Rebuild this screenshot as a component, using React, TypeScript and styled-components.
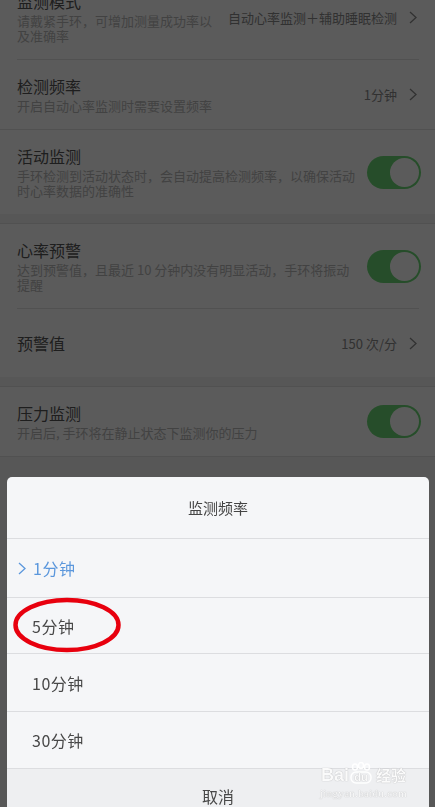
import React from "react";
import styled, { createGlobalStyle } from "styled-components";

const GlobalStyle = createGlobalStyle`
  html, body {
    margin: 0;
    padding: 0;
    height: 807px;
    overflow: hidden;
    background: #f4f4f4;
    font-family: "Noto Sans CJK SC", "Noto Sans", sans-serif;
  }
`;

const Page = styled.div`
  margin-top: -25px;
`;

const Group = styled.section<{ $spaced?: boolean; $closed?: boolean }>`
  background: #fff;
  margin-top: ${(p) => (p.$spaced ? "9px" : "0")};
  border-top: ${(p) => (p.$spaced !== undefined ? "1px solid #e3e3e3" : "none")};
  border-bottom: ${(p) => (p.$closed ? "1px solid #e3e3e3" : "none")};
`;

const Row = styled.div<{ $last?: boolean; $tall?: boolean }>`
  display: flex;
  align-items: center;
  gap: 12px;
  margin: 0 16px 0 17px;
  padding: 16px 0;
  min-height: ${(p) => (p.$tall ? "36px" : "0")};
  border-bottom: ${(p) => (p.$last ? "none" : "1px solid #e3e3e3")};
`;

const Texts = styled.div`
  flex: 1;
  min-width: 0;
`;

const Title = styled.div`
  font-size: 16px;
  line-height: 20px;
  color: #555;
`;

const Sub = styled.div`
  margin-top: 2px;
  font-size: 13px;
  line-height: 15px;
  color: #b9b9b9;
`;

const Value = styled.div`
  display: flex;
  align-items: center;
  flex-shrink: 0;
  font-size: 13px;
  color: #8a8a8a;
  svg {
    margin: 0 2px 0 12px;
  }
`;

const Toggle = styled.div`
  flex-shrink: 0;
  width: 54px;
  height: 33px;
  margin-right: -2px;
  border-radius: 17px;
  background: #6bd975;
  display: flex;
  justify-content: flex-end;
  align-items: center;
  padding: 0 2px;
  box-sizing: border-box;

  &::after {
    content: "";
    width: 29px;
    height: 29px;
    border-radius: 50%;
    background: #fff;
  }
`;

const Overlay = styled.div`
  position: fixed;
  inset: 0;
  background: rgba(0, 0, 0, 0.645);
  display: flex;
  flex-direction: column;
  padding: 477px 6px 0 7px;
  overflow: hidden;
`;

const Sheet = styled.div`
  position: relative;
  background: #f5f6f8;
  border-radius: 5px 5px 0 0;
  overflow: hidden;
`;

const SheetTitle = styled.div`
  height: 61px;
  display: flex;
  align-items: center;
  justify-content: center;
  font-size: 15px;
  color: #444;
  border-bottom: 1px solid #dcdde0;
`;

const Option = styled.div<{ $active?: boolean; $h: number }>`
  position: relative;
  height: ${(p) => p.$h}px;
  display: flex;
  align-items: center;
  padding-left: 25px;
  font-size: 16px;
  letter-spacing: 0.5px;
  color: ${(p) => (p.$active ? "#5b97dc" : "#484848")};
  border-bottom: 1px solid #dcdde0;

  svg.mark {
    margin-left: -14px;
    margin-right: 7px;
  }
`;

const Circle = styled.svg`
  position: absolute;
  left: 4px;
  top: -1px;
`;

const Cancel = styled.div`
  background: #eeeff1;
  padding: 17px 0 20px;
  line-height: 20px;
  text-align: center;
  font-size: 16px;
  color: #484848;
`;

const Watermark = styled.div`
  position: absolute;
  right: 22px;
  bottom: 8px;
  display: flex;
  flex-direction: column;
  align-items: center;
  color: rgba(255, 255, 255, 0.95);
  text-shadow: 0 0 1px rgba(0, 0, 0, 0.35);
  pointer-events: none;
`;

const MarkTop = styled.div`
  display: flex;
  align-items: flex-end;
  font-family: "Liberation Sans", sans-serif;
  font-weight: bold;
  font-size: 18px;
  line-height: 18px;
`;

const MarkCn = styled.span`
  font-family: "Noto Sans CJK SC", sans-serif;
  font-size: 15px;
  margin-left: 3px;
`;

const MarkUrl = styled.div`
  font-family: "Liberation Serif", serif;
  font-size: 11px;
  margin-top: 3px;
  letter-spacing: 0.3px;
`;

const Chevron = ({ color = "#8a8a8a", className }: { color?: string; className?: string }) => (
  <svg className={className} width="8" height="13" viewBox="0 0 8 13">
    <polyline points="1,1 7,6.5 1,12" fill="none" stroke={color} strokeWidth="1.3" />
  </svg>
);

const options = [
  { label: "1分钟", h: 58 },
  { label: "5分钟", h: 55 },
  { label: "10分钟", h: 57 },
  { label: "30分钟", h: 56 },
];

export default function App() {
  return (
    <>
      <GlobalStyle />
      <Page>
        <Group>
          <Row>
            <Texts>
              <Title>监测模式</Title>
              <Sub>请戴紧手环，可增加测量成功率以及准确率</Sub>
            </Texts>
            <Value>
              自动心率监测＋辅助睡眠检测
              <Chevron />
            </Value>
          </Row>
          <Row $last>
            <Texts>
              <Title>检测频率</Title>
              <Sub>开启自动心率监测时需要设置频率</Sub>
            </Texts>
            <Value>
              1分钟
              <Chevron />
            </Value>
          </Row>
        </Group>
        <Group $spaced={false}>
          <Row $last>
            <Texts>
              <Title>活动监测</Title>
              <Sub>手环检测到活动状态时，会自动提高检测频率，以确保活动时心率数据的准确性</Sub>
            </Texts>
            <Toggle />
          </Row>
        </Group>
        <Group $spaced>
          <Row>
            <Texts>
              <Title>心率预警</Title>
              <Sub>达到预警值，且最近 10 分钟内没有明显活动，手环将振动提醒</Sub>
            </Texts>
            <Toggle />
          </Row>
          <Row $last $tall>
            <Texts>
              <Title>预警值</Title>
            </Texts>
            <Value>
              150 次/分
              <Chevron />
            </Value>
          </Row>
        </Group>
        <Group $spaced $closed>
          <Row $last>
            <Texts>
              <Title>压力监测</Title>
              <Sub>开启后, 手环将在静止状态下监测你的压力</Sub>
            </Texts>
            <Toggle />
          </Row>
        </Group>
      </Page>

      <Overlay>
        <Sheet>
          <SheetTitle>监测频率</SheetTitle>
          {options.map((o, i) => (
            <Option key={o.label} $active={i === 0} $h={o.h}>
              {i === 0 && <Chevron className="mark" color="#5b97dc" />}
              {o.label}
              {i === 1 && (
                <Circle width="112" height="56" viewBox="0 0 112 56">
                  <ellipse cx="56" cy="28" rx="51.5" ry="25" fill="none" stroke="#e8000e" strokeWidth="4.5" />
                </Circle>
              )}
            </Option>
          ))}
          <Cancel>取消</Cancel>
          <Watermark>
            <MarkTop>
              Bai
              <svg width="24" height="22" viewBox="0 0 24 22">
                <g fill="none" stroke="rgba(255,255,255,0.95)" strokeWidth="1.5">
                  <ellipse cx="6" cy="5" rx="2.5" ry="3" />
                  <ellipse cx="12" cy="3.5" rx="2.5" ry="3" />
                  <ellipse cx="18" cy="5" rx="2.5" ry="3" />
                  <rect x="2" y="10" width="20" height="11" rx="5" />
                </g>
                <text x="12" y="19" textAnchor="middle" fontSize="11" fontWeight="bold" fill="rgba(255,255,255,0.95)" fontFamily="Liberation Sans, sans-serif">
                  du
                </text>
              </svg>
              <MarkCn>经验</MarkCn>
            </MarkTop>
            <MarkUrl>jingyan.baidu.com</MarkUrl>
          </Watermark>
        </Sheet>
      </Overlay>
    </>
  );
}
